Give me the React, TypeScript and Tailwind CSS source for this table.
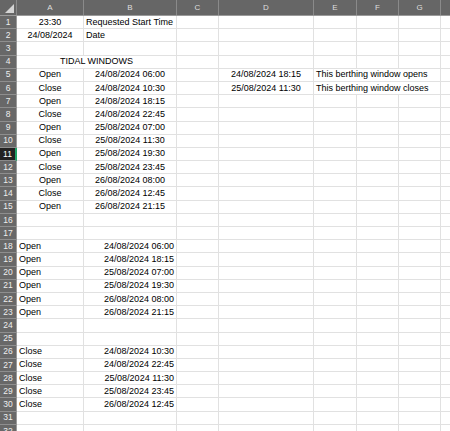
import React from 'react';

type Cell = { text?: string; align?: 'left' | 'center' | 'right'; span?: number };

const COLS = ['A', 'B', 'C', 'D', 'E', 'F', 'G', 'H'];
const WIDTHS = [67, 93, 42, 95, 43, 42, 42, 60];

const opens = ['24/08/2024 06:00', '24/08/2024 18:15', '25/08/2024 07:00', '25/08/2024 19:30', '26/08/2024 08:00', '26/08/2024 21:15'];
const closes = ['24/08/2024 10:30', '24/08/2024 22:45', '25/08/2024 11:30', '25/08/2024 23:45', '26/08/2024 12:45'];
const tidal = [
  ['Open', '24/08/2024 06:00'],
  ['Close', '24/08/2024 10:30'],
  ['Open', '24/08/2024 18:15'],
  ['Close', '24/08/2024 22:45'],
  ['Open', '25/08/2024 07:00'],
  ['Close', '25/08/2024 11:30'],
  ['Open', '25/08/2024 19:30'],
  ['Close', '25/08/2024 23:45'],
  ['Open', '26/08/2024 08:00'],
  ['Close', '26/08/2024 12:45'],
  ['Open', '26/08/2024 21:15'],
];

function buildRows(): Cell[][] {
  const rows: Cell[][] = [];
  rows.push([{ text: '23:30', align: 'center' }, { text: 'Requested Start Time', align: 'left' }]);
  rows.push([{ text: '24/08/2024', align: 'center' }, { text: 'Date', align: 'left' }]);
  rows.push([]);
  rows.push([{ text: 'TIDAL WINDOWS', align: 'center', span: 2 }]);
  tidal.forEach(([a, b], i) => {
    const r: Cell[] = [{ text: a, align: 'center' }, { text: b, align: 'center' }];
    if (i === 0) r.push({}, { text: '24/08/2024 18:15', align: 'center' }, { text: 'This berthing window opens', align: 'left', span: 3 });
    if (i === 1) r.push({}, { text: '25/08/2024 11:30', align: 'center' }, { text: 'This berthing window closes', align: 'left', span: 3 });
    rows.push(r);
  });
  rows.push([], []);
  opens.forEach((d) => rows.push([{ text: 'Open', align: 'left' }, { text: d, align: 'right' }]));
  rows.push([], []);
  closes.forEach((d) => rows.push([{ text: 'Close', align: 'left' }, { text: d, align: 'right' }]));
  rows.push([], []);
  return rows;
}

function fillRow(cells: Cell[]) {
  const out: { cell: Cell; width: number }[] = [];
  let col = 0;
  let i = 0;
  while (col < COLS.length) {
    const c = cells[i] || {};
    const span = c.span || 1;
    let w = 0;
    for (let k = 0; k < span; k++) w += WIDTHS[col + k];
    out.push({ cell: c, width: w });
    col += span;
    i++;
  }
  return out;
}

const App: React.FC = () => {
  const rows = buildRows();

  return (
    <div className="w-[450px] h-[431px] overflow-hidden bg-white" style={{ fontFamily: '"Liberation Sans", Arial, sans-serif' }}>
      {/* column headers */}
      <div className="flex h-[16px] bg-[#666666] border-b border-[#9a9a9a]">
        <div className="w-[17px] shrink-0 relative border-r border-[#8a8a8a]">
          <svg className="absolute right-[2px] bottom-[2px]" width="9" height="9" viewBox="0 0 9 9">
            <polygon points="9,0 9,9 0,9" fill="#d4d4d4" />
          </svg>
        </div>
        {COLS.map((c, i) => (
          <div
            key={c}
            style={{ width: WIDTHS[i] }}
            className="shrink-0 flex items-center justify-center border-r border-[#8a8a8a] text-[8px] text-[#dedede]"
          >
            {c !== 'H' && c}
          </div>
        ))}
      </div>

      {rows.map((r, ri) => {
        const n = ri + 1;
        const active = n === 11;
        return (
          <div key={n} className="flex h-[13.2px]">
            <div
              className={`w-[17px] shrink-0 flex items-center justify-center text-[8.5px] border-b ${
                active
                  ? 'bg-[#222222] text-white border-r-2 border-r-[#21a366] border-b-[#8a8a8a]'
                  : 'bg-[#686868] text-[#eeeeee] border-r border-r-[#9a9a9a] border-b-[#8e8e8e]'
              }`}
            >
              {n}
            </div>
            {fillRow(r).map(({ cell, width }, ci) => (
              <div
                key={ci}
                style={{ width }}
                className={`shrink-0 flex items-center px-[2px] border-r border-b border-[#e1e1e1] text-[9px] text-black whitespace-nowrap overflow-visible leading-none ${
                  cell.align === 'center' ? 'justify-center' : cell.align === 'right' ? 'justify-end' : 'justify-start'
                }`}
              >
                {cell.text}
              </div>
            ))}
          </div>
        );
      })}
    </div>
  );
};

export default App;
